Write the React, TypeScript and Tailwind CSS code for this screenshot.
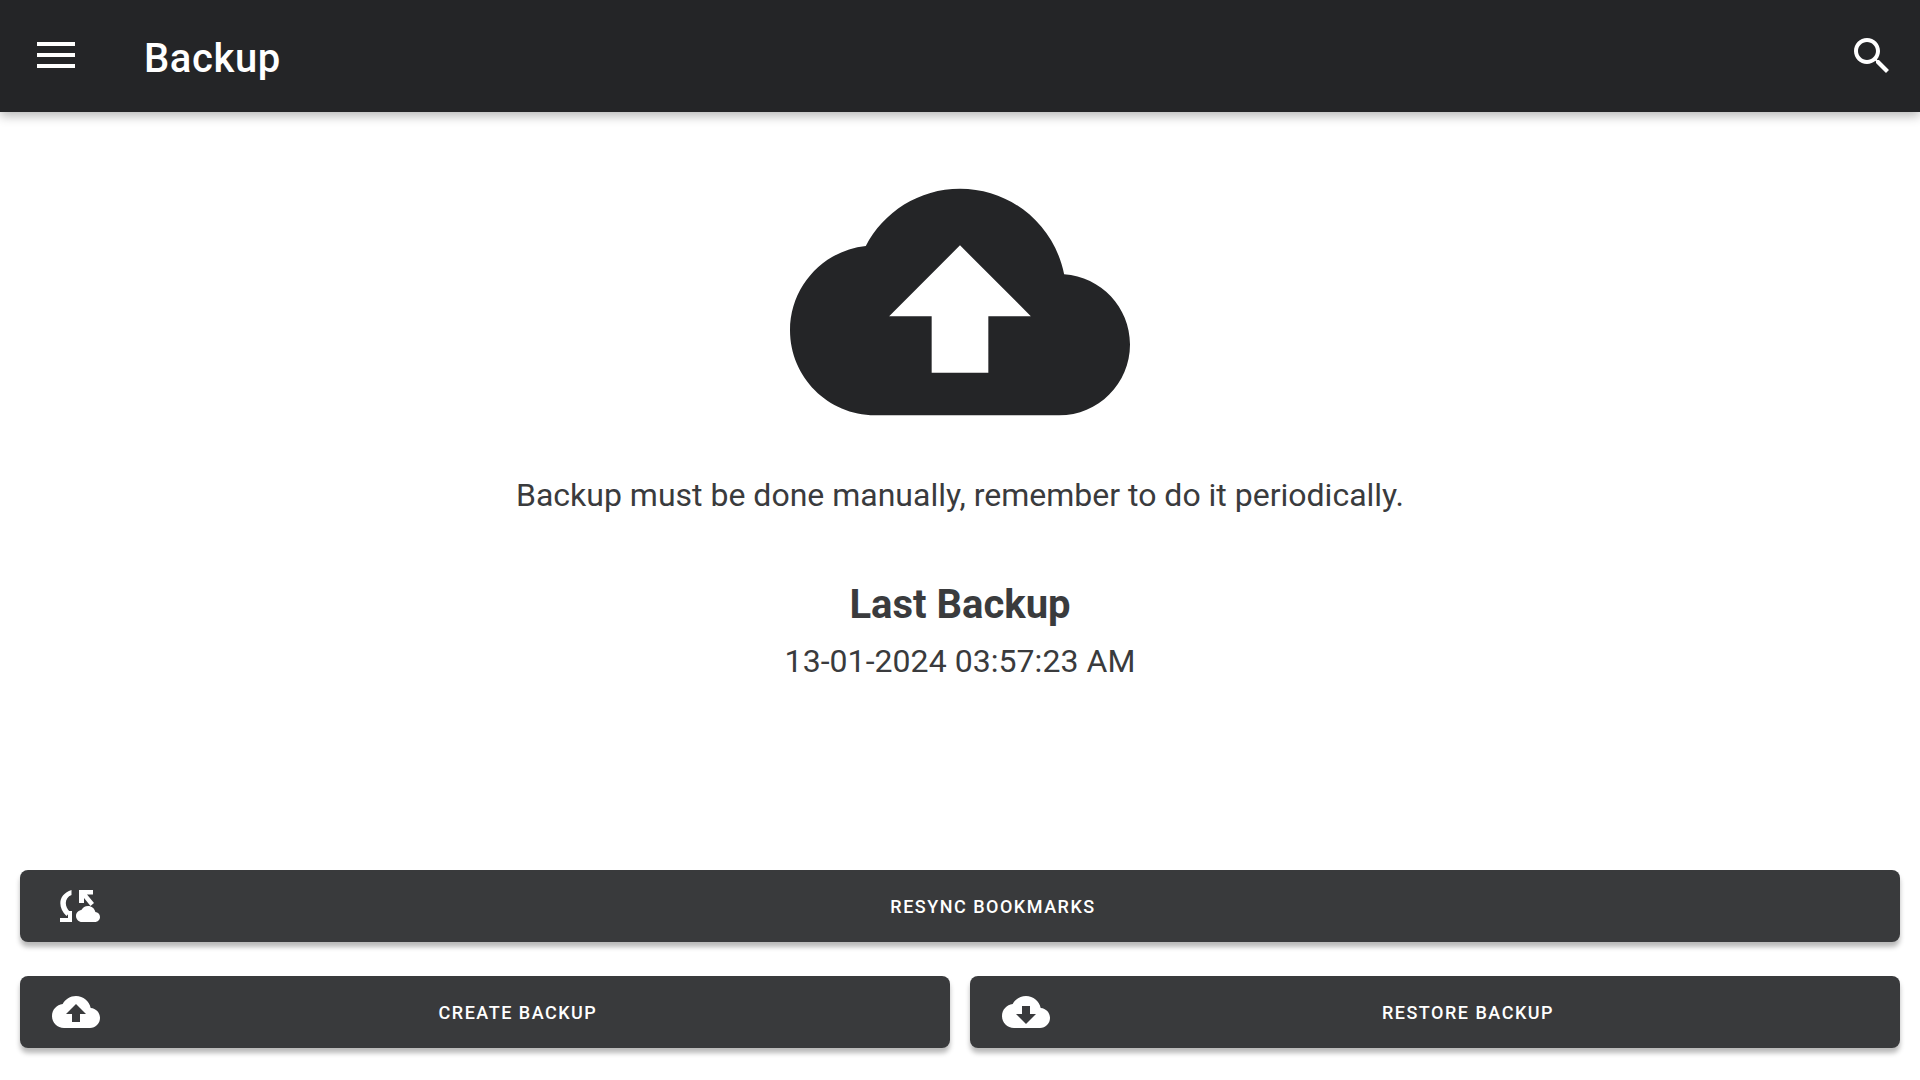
const cloud = "M19.35 10.04C18.67 6.59 15.64 4 12 4 9.11 4 6.6 5.64 5.35 8.04 2.34 8.36 0 10.91 0 14c0 3.31 2.69 6 6 6h13c2.76 0 5-2.24 5-5 0-2.64-2.05-4.78-4.65-4.96z";
const upload = cloud + "M14 13v4h-4v-4H7l5-5 5 5h-3z";
const download = cloud + "M17 13l-5 5-5-5h3V9h4v4h3z";

function Button({ label, icon, className }: { label: string; icon: React.ReactNode; className: string }) {
  return (
    <button className={`flex h-[72px] items-center rounded-lg bg-[#393a3c] pr-4 text-white shadow-[0_5px_5px_rgba(0,0,0,0.28)] ${className}`}>
      <span className="flex w-[80px] shrink-0 justify-end">{icon}</span>
      <span className="flex-1 pl-[2px] text-center text-[18px] font-medium tracking-[1.5px]">{label}</span>
    </button>
  );
}

function Cloud({ d }: { d: string }) {
  return (
    <svg viewBox="0 0 24 24" className="h-12 w-12 shrink-0" fill="#fff">
      <path d={d} fillRule="evenodd" />
    </svg>
  );
}

function Resync() {
  return (
    <svg viewBox="0 0 40 32" className="h-8 w-10" fill="#fff">
      <path d="M11.5 0 C-1 4 -3.5 16 6.5 26 L10 22 C3.5 15.5 5 7.5 11.5 5 Z" />
      <path d="M0 32 V28 H8 V21 H12 V32 Z" />
      <path d="M19 0 H33 V4.5 H27 L34 13 L30.5 16 L24 8 V13 H19 Z" />
      <path d={cloud} transform="translate(16 12)" />
    </svg>
  );
}

export default function App() {
  return (
    <div className="flex h-[1080px] w-[1920px] flex-col overflow-hidden bg-white font-['Roboto',sans-serif]">
      <header className="z-10 flex h-[112px] shrink-0 items-center justify-between bg-[#242527] shadow-[0_4px_10px_rgba(0,0,0,0.28)]">
        <div className="flex items-center">
          <div className="ml-[37px] flex h-[26px] w-[38px] -translate-y-[1px] flex-col justify-between">
            <span className="h-1 bg-white" />
            <span className="h-1 bg-white" />
            <span className="h-1 bg-white" />
          </div>
          <h1 className="ml-[69px] mt-[5px] text-[40px] font-medium leading-none tracking-[0.6px] text-white">Backup</h1>
        </div>
        <svg viewBox="0 0 24 24" className="mr-[24px] h-12 w-12" fill="#fff">
          <path d="M15.5 14h-.79l-.28-.27C15.41 12.59 16 11.11 16 9.5 16 5.91 13.09 3 9.5 3S3 5.91 3 9.5 5.91 16 9.5 16c1.61 0 3.09-.59 4.23-1.57l.27.28v.79l5 4.99L20.49 19l-4.99-5zm-6 0C7.01 14 5 11.99 5 9.5S7.01 5 9.5 5 14 7.01 14 9.5 11.99 14 9.5 14z" />
        </svg>
      </header>
      <main className="flex flex-1 flex-col items-center pt-[20px] text-[#3a3b3d]">
        <svg viewBox="0 0 24 24" className="h-[340px] w-[340px]" fill="#242527">
          <path d={upload} fillRule="evenodd" />
        </svg>
        <p className="mt-[-1px] text-[32px] leading-[48px]">Backup must be done manually, remember to do it periodically.</p>
        <h2 className="mt-[55px] text-[40px] font-bold leading-[61px]">Last Backup</h2>
        <p className="mt-[2px] text-[32px] leading-[48px] tracking-[0.05px]">13-01-2024 03:57:23 AM</p>
      </main>
      <div className="flex flex-col gap-[34px] px-5 pb-[32px]">
        <Button label="RESYNC BOOKMARKS" icon={<Resync />} className="w-full" />
        <div className="flex gap-5">
          <Button label="CREATE BACKUP" icon={<Cloud d={upload} />} className="flex-1" />
          <Button label="RESTORE BACKUP" icon={<Cloud d={download} />} className="flex-1" />
        </div>
      </div>
    </div>
  );
}
